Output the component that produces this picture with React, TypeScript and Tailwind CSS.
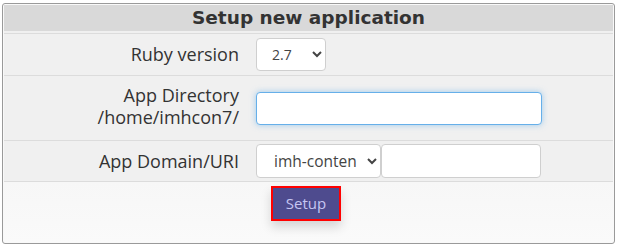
import React from 'react';

const font = { fontFamily: '"Open Sans", "DejaVu Sans", sans-serif' };
const titleFont = { fontFamily: '"DejaVu Sans", sans-serif' };

export default function App() {
  return (
    <div className="w-[620px] h-[250px] bg-white pt-[3px] pl-[2px]" style={font}>
      <div className="w-[613px] h-[241px] border border-[#9a9a9a] rounded-[3px] p-[1px] flex flex-col bg-[#f9f9f9]">
        <div
          className="h-[26px] bg-[#d9d9d9] flex items-center justify-center text-[18.5px] font-bold text-[#333]"
          style={titleFont}
        >
          Setup new application
        </div>

        <div className="bg-[#f0f0f0] pt-[2px]">
          <div className="h-[42px] border-t border-[#dcdcdc] flex items-center">
            <div className="w-[235px] text-right text-[18px] text-[#333]">Ruby version</div>
            <div className="pl-[17px]">
              <select
                className="w-[70px] h-[33px] border border-[#cfcfcf] rounded-[4px] bg-white pl-[11px] text-[14px] text-[#444]"
                style={font}
                defaultValue="2.7"
              >
                <option>2.7</option>
              </select>
            </div>
          </div>

          <div className="h-[65px] border-t border-[#dcdcdc] flex items-center">
            <div className="w-[237px] text-right text-[18px] leading-[22px] text-[#333] pb-[5px] pr-[2px]">
              App Directory
              <br />
              /home/imhcon7/
            </div>
            <div className="pl-[15px]">
              <input
                type="text"
                className="w-[286px] h-[33px] border border-[#66afe9] rounded-[4px] bg-white shadow-[0_0_6px_rgba(102,175,233,0.6)] outline-none"
              />
            </div>
          </div>

          <div className="h-[41px] border-t border-[#dcdcdc] flex items-center">
            <div className="w-[235px] text-right text-[18px] text-[#333]">App Domain/URI</div>
            <div className="pl-[17px] flex">
              <select
                className="w-[125px] h-[34px] border border-[#cfcfcf] rounded-[4px] bg-white pl-[13px] text-[15.5px] text-[#444]"
                style={font}
                defaultValue="imh-conten"
              >
                <option>imh-conten</option>
              </select>
              <input
                type="text"
                className="w-[160px] h-[34px] border border-[#cfcfcf] rounded-[4px] bg-white outline-none"
              />
            </div>
          </div>
        </div>

        <div className="flex-1 border-t border-[#dcdcdc] bg-gradient-to-b from-[#f7f7f7] to-[#fafafa] flex justify-center pt-[4px]">
          <button
            className="w-[70px] h-[35px] mr-[5px] border-2 border-[#ff0000] bg-[#4e4b8e] text-[#c6c6f2] text-[15px] shadow-[0_6px_10px_rgba(0,0,0,0.15)]"
            style={font}
          >
            Setup
          </button>
        </div>
      </div>
    </div>
  );
}
